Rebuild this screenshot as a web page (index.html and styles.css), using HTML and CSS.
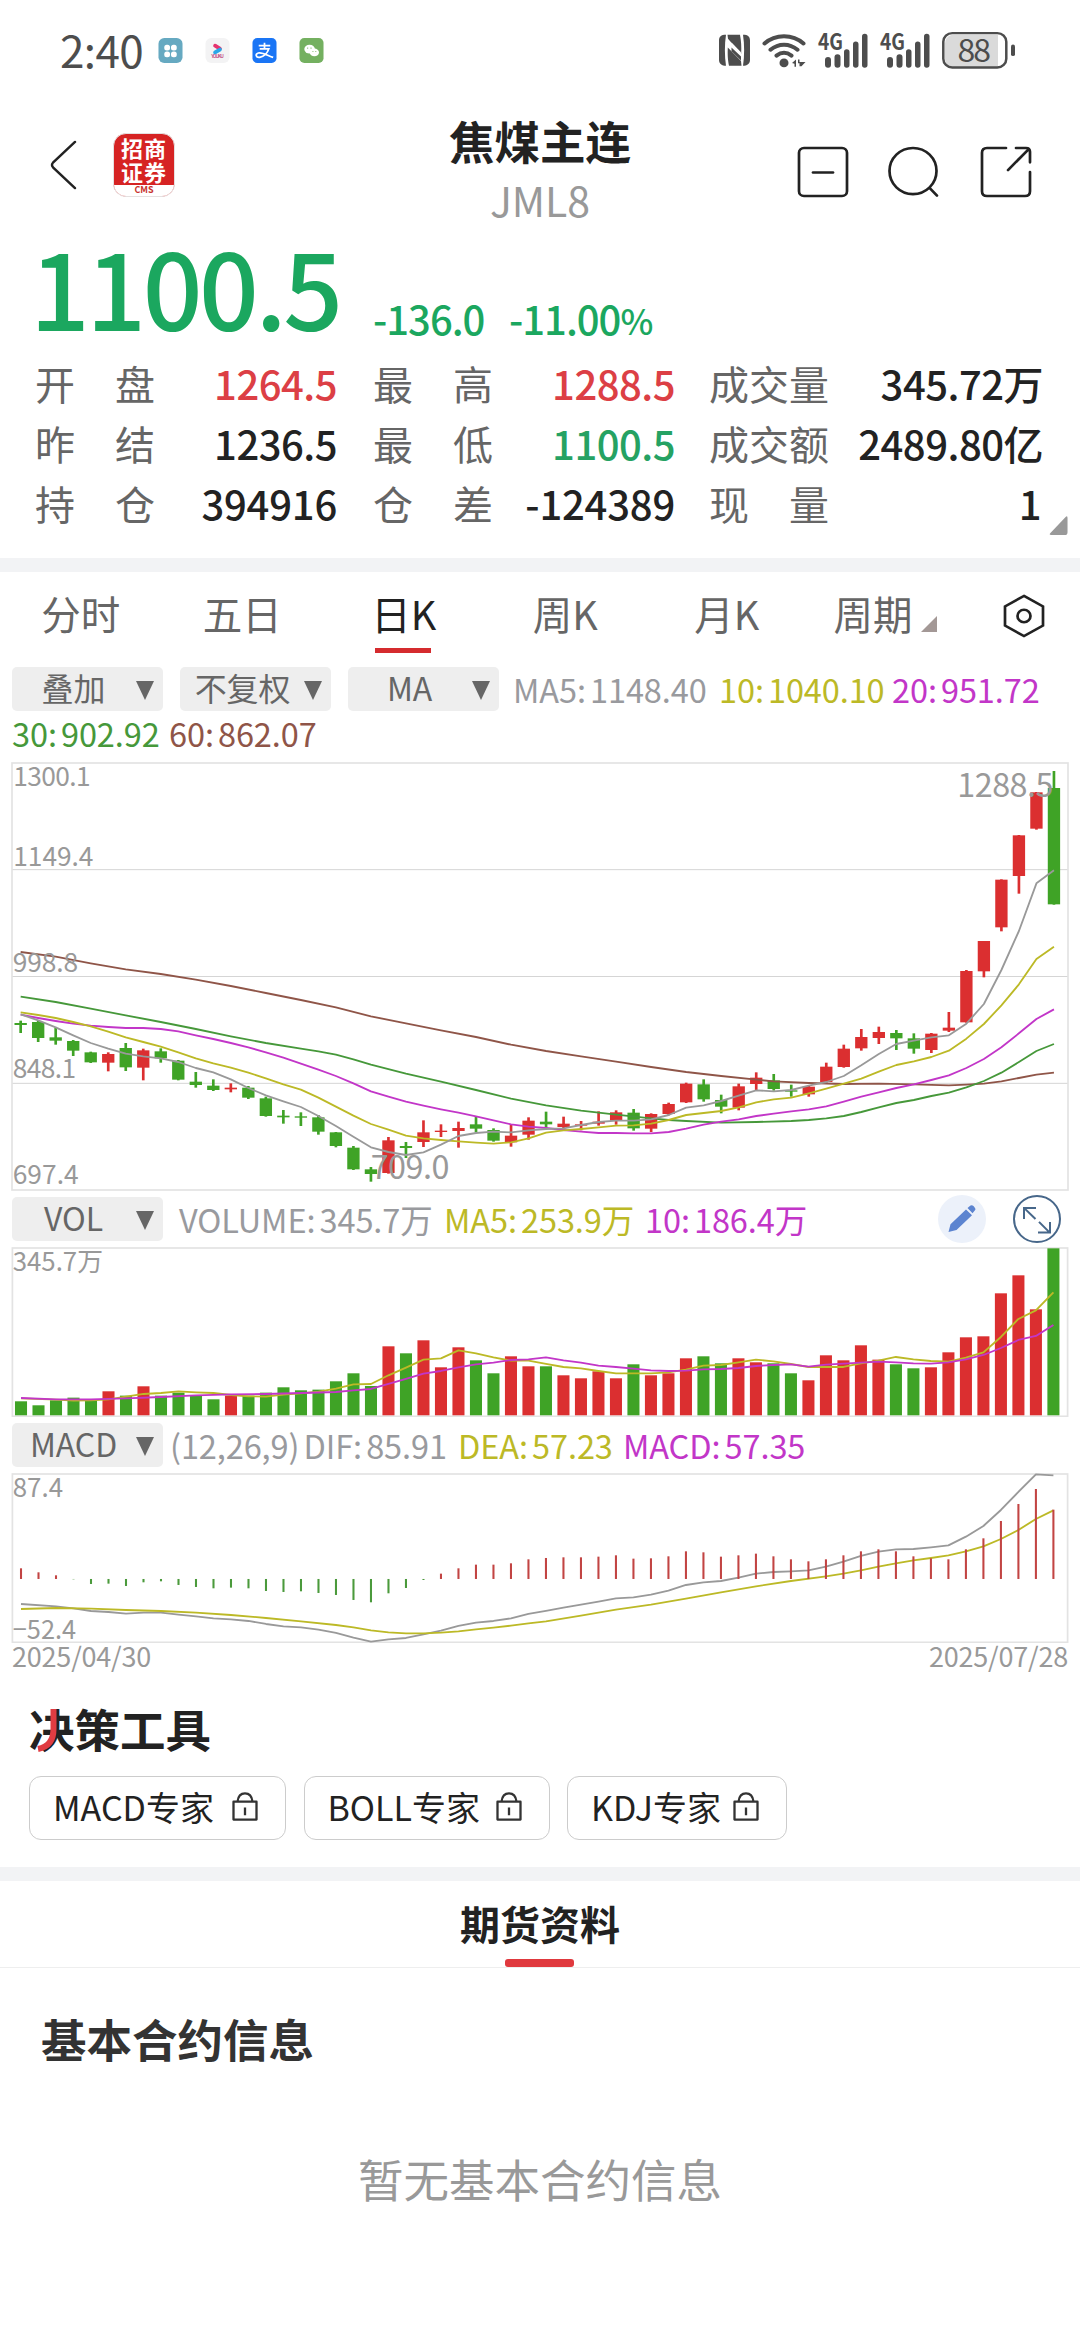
FILE: index.html
```html
<!DOCTYPE html>
<html lang="zh-CN">
<head>
<meta charset="utf-8">
<title>焦煤主连 JML8</title>
<link rel="stylesheet" href="styles.css">
</head>
<body>
<div class="status">
  <span class="clock">2:40</span>
  <svg class="notif" viewBox="0 0 25 26"><rect width="25" height="26" rx="6" fill="#66a9c1"/><g fill="#fff"><rect x="6" y="7" width="6" height="6" rx="2.6"/><rect x="13" y="7" width="6" height="6" rx="2.6"/><rect x="6" y="14" width="6" height="6" rx="2.6"/><rect x="13" y="14" width="6" height="6" rx="2.6"/></g></svg>
  <svg class="notif" viewBox="0 0 25 26"><rect width="25" height="26" rx="6" fill="#f3f3f4"/><path d="M10 8l5 3" stroke="#e5346f" stroke-width="4" stroke-linecap="round"/><path d="M10 15l5-3" stroke="#2aa7e8" stroke-width="4" stroke-linecap="round"/><text x="12.5" y="21" class="tiny" text-anchor="middle" fill="#c4568a" textLength="13">YOUKU</text></svg>
  <svg class="notif" viewBox="0 0 25 26"><rect width="25" height="26" rx="5" fill="#1a75f5"/><path d="M6.500 8h12M12.500 5v6M7.500 11.200h9.500c-1.500 4.500-5 8-9.500 9-4 .5-5-3.500-1.500-4.600 4-1 9 2.200 15.500 4.600" fill="none" stroke="#fff" stroke-width="1.800"/></svg>
  <svg class="notif" viewBox="0 0 25 26"><rect width="25" height="26" rx="5" fill="#74b060"/><ellipse cx="10.500" cy="11.500" rx="5.500" ry="4.600" fill="#fff"/><ellipse cx="15.500" cy="15" rx="4.800" ry="4" fill="#fff"/><g fill="#74b060"><circle cx="8.500" cy="10.500" r=".7"/><circle cx="12" cy="10.500" r=".7"/><circle cx="14" cy="14" r=".6"/><circle cx="17" cy="14" r=".6"/></g></svg>
  <svg class="sys" viewBox="715 30 305 44" preserveAspectRatio="none">
    <g fill="#4d4d4d">
      <path d="M726 36c-5 0-7 2-7 6v20c0 4 3 6 7 6-1.500-10-1.500-22 0-32zM743 36c5 0 7 2 7 6v20c0 4-3 6-7 6 1.500-10 1.500-22 0-32z"/>
      <path d="M727.500 36H740c1.200 7 1.500 12 1.200 19.500L728 40zM741.500 68H729c-1.200-7-1.500-11-1.200-19L741 63z"/>
      <path d="M731.500 44l9.500 10v7l-9.500-10z" fill="#fff"/><path d="M731.500 49l9.500 9.500v4L731.500 53z"/>
      <circle cx="784" cy="65" r="4.500"/>
      <path d="M792 65l4-3.500v7.500h-1.500v-3zM798 61.500h1.500v2.500h6l-4 4.500h-2v-3h-1.500z"/>
      <rect x="825" y="59" width="6" height="11" rx="3"/><rect x="834.500" y="56" width="6" height="14" rx="3"/><rect x="844" y="51" width="5.500" height="19" rx="2.700"/><rect x="853" y="43" width="5.500" height="27" rx="2.700"/><rect x="862" y="35" width="5.500" height="35" rx="2.700"/>
      <rect x="887" y="59" width="6" height="11" rx="3"/><rect x="896.500" y="56" width="6" height="14" rx="3"/><rect x="906" y="51" width="5.500" height="19" rx="2.700"/><rect x="915" y="43" width="5.500" height="27" rx="2.700"/><rect x="924" y="35" width="5.500" height="35" rx="2.700"/>
      <text class="net" x="818" y="51.500" textLength="25" lengthAdjust="spacingAndGlyphs">4G</text><text class="net" x="880" y="51.500" textLength="25" lengthAdjust="spacingAndGlyphs">4G</text>
      <rect x="1011" y="46" width="4" height="12" rx="2"/>
    </g>
    <g fill="none" stroke="#4d4d4d" stroke-width="4" stroke-linecap="round"><path d="M764.500 45c11-10 28-10 39 0M770.500 51.500c8-7 19-7 27 0M776.500 57.500c5-4 10-4 15 0"/></g>
    <path d="M952 36h46v34h-46q-7-2-7-9V45q0-7 7-9z" fill="#dadada"/>
    <rect x="943.300" y="34.300" width="63" height="35.500" rx="9" fill="none" stroke="#4d4d4d" stroke-width="2.500"/>
    <text class="batt" x="957.500" y="64" textLength="33.500">88</text>
  </svg>
</div>

<header class="top">
  <svg class="back" viewBox="0 0 27 52" preserveAspectRatio="none"><path d="M25 2L3 23.500q-2 2.500 0 5L25 50" fill="none" stroke="#222" stroke-width="2.400" stroke-linecap="round"/></svg>
  <div class="brand"><div class="brand-name">招商<br>证券</div><div class="brand-tag">CMS</div></div>
  <div class="title"><h1>焦煤主连</h1><div class="code">JML8</div></div>
  <svg class="act" viewBox="0 0 52 54" preserveAspectRatio="none"><rect x="2" y="2" width="48" height="50" rx="5"/><path d="M16 27.500h20"/></svg>
  <svg class="act" viewBox="0 0 52 54" preserveAspectRatio="none"><ellipse cx="25" cy="26" rx="23.500" ry="24"/><path d="M42 44l7 7.500"/></svg>
  <svg class="act" viewBox="0 0 52 54" preserveAspectRatio="none"><path d="M26 2H7Q2 2 2 7v40q0 5 5 5h38q5 0 5-5V27M36 2h10q4 0 4 4v11M49 3L28 25"/></svg>
</header>

<div class="price"><span class="last">1100.5</span><span class="chg">-136.0</span><span class="chg">-11.00<small>%</small></span></div>
<div class="quote">
  <span class="k"><i>开</i><i>盘</i></span><b class="up">1264.5</b><span class="k"><i>最</i><i>高</i></span><b class="up">1288.5</b><span class="k"><i>成</i><i>交</i><i>量</i></span><b>345.72万</b>
  <span class="k"><i>昨</i><i>结</i></span><b>1236.5</b><span class="k"><i>最</i><i>低</i></span><b class="down">1100.5</b><span class="k"><i>成</i><i>交</i><i>额</i></span><b>2489.80亿</b>
  <span class="k"><i>持</i><i>仓</i></span><b class="whole">394916</b><span class="k"><i>仓</i><i>差</i></span><b class="whole">-124389</b><span class="k"><i>现</i><i>量</i></span><b class="one">1</b>
  <svg class="corner" viewBox="0 0 19 20"><path d="M17 1q2-2 2 1v15q0 3-3 3H2q-3 0-1-2z" fill="#999"/></svg>
</div>
<div class="band"></div>

<nav class="tabs">
  <span>分时</span><span>五日</span><span class="on">日K</span><span>周K</span><span>月K</span>
  <span class="period">周期<svg viewBox="0 0 16 16"><path d="M16 0v16H0z" fill="#a39896"/></svg></span>
  <svg class="hex" viewBox="0 0 42 46" preserveAspectRatio="none"><path d="M21 2l19 11v20L21 44 2 33V13z"/><circle cx="21" cy="23" r="6.500"/></svg>
</nav>

<div class="legend main">
  <span class="btn">叠加</span><span class="btn wide">不复权</span><span class="btn">MA</span>
  <span class="g">MA5: 1148.40</span><span class="y">10: 1040.10</span><span class="m">20: 951.72</span>
</div>
<div class="legend second"><span class="n">30: 902.92</span><span class="r">60: 862.07</span></div>

<svg class="kline" viewBox="0 66 3240 1290">
  <path class="gridline" d="M36 389H3204M36 709.500H3204M36 1030H3204"/>
  <rect class="frame" x="36" y="69" width="3168" height="1281"/>
  <g id="k-plot"></g>
  <g class="axis"><text x="40" y="137" textLength="232">1300.1</text><text x="40" y="378" textLength="240">1149.4</text><text x="38" y="695" textLength="196">998.8</text><text x="38" y="1014" textLength="190">848.1</text><text x="38" y="1331" textLength="198">697.4</text></g>
  <g class="peak"><text x="2872" y="171" textLength="288">1288.5</text><text x="1112" y="1318" textLength="236">709.0</text></g>
</svg>

<div class="legend vol">
  <span class="btn">VOL</span><span class="g">VOLUME: 345.7万</span><span class="y">MA5: 253.9万</span><span class="m">10: 186.4万</span>
  <svg class="tool edit" viewBox="0 0 48 50" preserveAspectRatio="none"><ellipse cx="24" cy="25" rx="24" ry="25" fill="#ecf1fa"/><path d="M10.500 38.500l2-8L28 15l6 6-15.500 15.500zM29.500 13.500l3-2.500q1.500-1 3 .500l1.500 2q1 1.500 0 2.500l-2.500 3z" fill="#5c84d0"/></svg>
  <svg class="tool" viewBox="0 0 48 50" preserveAspectRatio="none"><g fill="none" stroke="#47678a" stroke-width="2"><ellipse cx="24" cy="25" rx="23" ry="24"/><path d="M11 25V13.500h12M11.500 14l11 11M37 28v11H25M26 28l10.500 11"/></g></svg>
</div>
<svg class="sub" viewBox="0 170 3136 511" preserveAspectRatio="none">
  <rect class="frame" x="36" y="173" width="3064" height="505"/>
  <g id="v-plot"></g>
  <g class="axis"><text x="37" y="242" textLength="262" lengthAdjust="spacingAndGlyphs">345.7万</text></g>
</svg>
<div class="legend macd">
  <span class="btn">MACD</span><span class="g">(12,26,9)&nbsp;DIF: 85.91</span><span class="y">DEA: 57.23</span><span class="m">MACD: 57.35</span>
</div>
<svg class="sub" viewBox="0 848 3136 511" preserveAspectRatio="none">
  <rect class="frame" x="36" y="851" width="3064" height="505"/>
  <g id="m-plot"></g>
  <g class="axis"><text x="37" y="920" textLength="146" lengthAdjust="spacingAndGlyphs">87.4</text><text x="37" y="1346" textLength="184" lengthAdjust="spacingAndGlyphs">−52.4</text></g>
</svg>
<div class="dates"><span>2025/04/30</span><span>2025/07/28</span></div>

<section class="tools">
  <h2>决策工具<svg viewBox="0 0 22 44"><path d="M17.500 0v20q0 17-15.500 20" fill="none" stroke="#e03c42" stroke-width="6"/></svg></h2>
  <div class="pills">
    <span class="pill">MACD专家<svg viewBox="0 0 26 30" preserveAspectRatio="none"><path d="M1.500 10h23v18.500h-23zM5.500 10q1-8.500 7.500-8.500T20.500 10M13 16v8"/></svg></span>
    <span class="pill">BOLL专家<svg viewBox="0 0 26 30" preserveAspectRatio="none"><path d="M1.500 10h23v18.500h-23zM5.500 10q1-8.500 7.500-8.500T20.500 10M13 16v8"/></svg></span>
    <span class="pill">KDJ专家<svg viewBox="0 0 26 30" preserveAspectRatio="none"><path d="M1.500 10h23v18.500h-23zM5.500 10q1-8.500 7.500-8.500T20.500 10M13 16v8"/></svg></span>
  </div>
</section>
<div class="band"></div>
<div class="info-tab"><span>期货资料</span></div>
<section class="info"><h3>基本合约信息</h3><p>暂无基本合约信息</p></section>
<script src="chart.js"></script>
</body>
</html>
```
FILE: styles.css
```css
* { box-sizing: border-box; }
html, body { margin: 0; }
body {
  width: 1080px; height: 2340px; overflow: hidden; background: #fff; color: #222;
  font-family: "Noto Sans CJK SC", "Noto Sans", sans-serif; font-size: 40px;
}
i { font-style: normal; }
svg { display: block; flex: none; }
h1, h2, h3, p { margin: 0; }

.status { height: 104px; display: flex; align-items: center; padding: 0 60px 3px; }
.clock { width: 98px; font-size: 44px; line-height: 60px; letter-spacing: -.6px; color: #4d4d4d; padding-bottom: 3px; }
.notif { width: 25px; height: 25px; margin-right: 22px; }
.tiny { font-size: 5px; font-weight: 700; }
.sys { width: 305px; height: 42.600px; margin-left: auto; }
.net { font-size: 23px; font-weight: 700; }
.batt { font-size: 32px; fill: #4d4d4d; font-weight: 400; }

.top { height: 122px; display: grid; grid-template-columns: 62px 93px minmax(0, 1fr) 51px 40px 52px 40px 52px; padding: 0 48px 0 50px; align-items: start; }
.back { width: 27px; height: 50px; margin-top: 36px; }
.brand { width: 62px; height: 64px; margin-top: 29px; margin-left: 1px; border-radius: 13px; overflow: hidden; background: #d62323; border: 1px solid #e5e0e0; }
.brand-name { height: 51px; padding-top: 2px; text-align: center; color: #fff; font-weight: 700; font-size: 22px; line-height: 23.500px; letter-spacing: 1px; }
.brand-tag { height: 12px; background: #fff; color: #c8342e; font-size: 9px; font-weight: 700; line-height: 10px; text-align: center; }
.title { grid-column: 3; text-align: center; margin-top: 4px; width: 670px; }
.title h1 { font-size: 45.500px; line-height: 64px; font-weight: 700; }
.code { font-size: 41px; line-height: 48px; color: #999; padding-top: 3px; }
.top .act { width: 52px; height: 52px; margin-top: 41.500px; fill: none; stroke: #222; stroke-width: 2.700; stroke-linecap: round; }
.top .act:nth-of-type(2) { grid-column: 4; }
.top .act:nth-of-type(3) { grid-column: 6; }
.top .act:nth-of-type(4) { grid-column: 8; }

.price { height: 129px; display: flex; align-items: baseline; padding-left: 30px; color: #1ba75f; font-weight: 500; line-height: 119px; }
.last { width: 343px; font-size: 105px; letter-spacing: -3.500px; }
.chg { width: 136px; font-size: 40px; letter-spacing: -1px; white-space: nowrap; transform: translateY(4px); }
.chg small { font-size: 35px; }
.quote { position: relative; height: 203px; padding: 0 37px 0 35px; display: grid; grid-template-columns: 120px 182px 155px 183px 154px 1fr; grid-template-rows: repeat(3, 60px); line-height: 56px; }
.k { display: flex; justify-content: space-between; width: 120px; color: #666; }
.k:nth-of-type(3n+2), .k:nth-of-type(3n) { margin-left: 36px; }
.k:nth-of-type(3n) { margin-left: 34px; }
.quote b { text-align: right; font-weight: 500; font-size: 40px; letter-spacing: -.5px; white-space: nowrap; }
.quote .whole { letter-spacing: -.2px; }
.quote .one { padding-right: 2px; }
.up { color: #dc3f45; }
.down { color: #25a263; }
.corner { position: absolute; left: 1049px; top: 161px; width: 19px; height: 19px; }
.band { height: 14px; background: #f2f3f5; }

.tabs { height: 95px; display: flex; color: #666; line-height: 82px; font-size: 39.500px; }
.tabs > span { width: 161.500px; text-align: center; position: relative; }
.tabs .on { color: #222; }
.tabs .on::after { content: ""; position: absolute; left: 52px; top: 76px; width: 56px; height: 5px; background: #d52b2e; }
.tabs .period { width: 125px; margin-left: 26px; display: flex; gap: 8px; }
.tabs .period svg { width: 16px; height: 16px; margin-top: 44px; }
.hex { width: 42px; height: 44px; margin: 21.500px 0 0 44px; fill: none; stroke: #222; stroke-width: 2.700; }

.legend { display: flex; align-items: center; padding-left: 12px; font-size: 32.500px; letter-spacing: -.1px; white-space: nowrap; line-height: 44px; height: 44px; position: relative; }
.legend > span { word-spacing: -3px; }
.btn { width: 151px; height: 44px; margin-right: 17px; border-radius: 5px; background: #eee; color: #666; font-size: 32px; line-height: 41px; text-align: center; padding-right: 28px; position: relative; }
.btn::after { content: ""; position: absolute; right: 9px; top: 14px; border: 9px solid transparent; border-top: 19px solid #666; border-bottom: 0; }
.btn.wide { padding-right: 26px; }
.g { color: #999a9e; } .y { color: #bcb926; } .m { color: #c236c8; } .n { color: #46983a; } .r { color: #8f5548; }
.main .btn:nth-child(3) { margin-right: 14px; }
.main .g { width: 206px; } .main .y { width: 173px; }
.second { height: 51px; align-items: flex-start; }
.second .n { width: 157px; }
.vol { margin-top: 5px; }
.vol .btn { margin-right: 16px; }
.vol .g { width: 265px; } .vol .y { width: 201px; }
.tool { width: 48px; height: 48px; position: absolute; left: 1013px; top: -2px; }
.tool.edit { left: 938px; }
.macd { margin-top: 6px; }
.macd .btn { margin-right: 7px; }
.macd .g { width: 288px; } .macd .y { width: 165px; }

.kline { width: 1080px; height: 430px; }
.sub { width: 1080px; height: 170.300px; margin-top: 5.700px; }
.frame { fill: none; stroke: #e3e3e3; stroke-width: 5; }
.gridline { stroke: #d5d5d5; stroke-width: 3; }
.axis text { font-size: 79px; fill: #999; }
.peak text { font-size: 97px; fill: #999; }
.line { fill: none; stroke-width: 5.500; stroke-linejoin: round; }
.dates { display: flex; justify-content: space-between; padding: 0 12px; height: 40px; font-size: 27px; line-height: 26px; color: #999; letter-spacing: -.2px; }

.tools { height: 184px; padding: 15px 29px 0; }
.tools h2 { font-size: 45.500px; line-height: 60px; height: 78px; position: relative; }
.tools h2 svg { position: absolute; left: 7px; top: 11px; width: 22px; height: 44px; }
.pills { display: flex; gap: 17.500px; }
.pill { width: 257px; height: 64px; border: 1px solid #ccc; border-radius: 12px; padding: 0 27px 2px 23px; display: flex; align-items: center; justify-content: space-between; font-size: 34px; white-space: nowrap; }
.pill:nth-child(2) { width: 246px; }
.pill:nth-child(3) { width: 220px; }
.pill svg { width: 26px; height: 29px; fill: none; stroke: #333; stroke-width: 2.300; stroke-linejoin: round; }
.info-tab { height: 87px; border-bottom: 1px solid #eee; text-align: center; font-weight: 700; line-height: 84px; font-size: 40px; position: relative; }
.info-tab::after { content: ""; position: absolute; left: 505px; bottom: 0; width: 69px; height: 8px; border-radius: 3px; background: #e0393e; }
.info { padding: 0 41px; }
.info h3 { font-size: 45.500px; line-height: 66px; padding-top: 37px; color: #333; }
.info p { font-size: 45.500px; line-height: 66px; margin-top: 74px; color: #999; text-align: center; }
```
FILE: chart.js
```js
// Each plot is drawn in the units of its own SVG viewBox.
const RED = '#db2f30', GREEN = '#3fa326';
const NS = 'http://www.w3.org/2000/svg';

function rect(parent, x, y, w, h, fill) {
  const r = document.createElementNS(NS, 'rect');
  r.setAttribute('x', x); r.setAttribute('y', y);
  r.setAttribute('width', w); r.setAttribute('height', Math.max(h, 1));
  r.setAttribute('fill', fill);
  parent.appendChild(r);
}
// "index:y" pairs; a missing index is interpolated by the straight segment.
function line(parent, pts, color, x0, step) {
  const d = pts.trim().split(/\s+/).map(p => {
    const [i, y] = p.split(':').map(Number);
    return (x0 + i * step) + ',' + y;
  }).join(' ');
  const p = document.createElementNS(NS, 'polyline');
  p.setAttribute('points', d); p.setAttribute('class', 'line'); p.setAttribute('stroke', color);
  parent.appendChild(p);
}
const seq = s => s.trim().split(/\s+/).map((y, i) => i + ':' + y).join(' ');

// high, body top, body bottom, low, direction
const candles = `842,849,855,879,g 842,846,894,906,g 862,892,902,914,g 900,903,932,948,g 935,937,967,969,g
937,942,968,994,r 909,924,982,993,g 926,931,983,1021,r 925,934,955,968,g 960,962,1019,1021,g
996,1025,1035,1043,g 1018,1037,1050,1053,g 1030,1043,1048,1057,r 1038,1043,1073,1077,g 1070,1075,1128,1130,g
1110,1127,1132,1151,g 1117,1129,1133,1158,g 1125,1132,1175,1184,g 1176,1177,1218,1222,g 1218,1223,1288,1290,g
1281,1288,1302,1325,g 1191,1201,1299,1301,r 1206,1218,1224,1254,g 1141,1177,1206,1221,r 1153,1172,1176,1191,r
1145,1164,1173,1223,r 1130,1153,1166,1177,g 1165,1170,1202,1205,g 1152,1187,1207,1220,r 1132,1142,1184,1199,r
1115,1145,1153,1163,g 1130,1151,1161,1165,r 1143,1153,1157,1171,r 1114,1145,1151,1157,r 1111,1117,1142,1154,r
1107,1118,1165,1172,g 1120,1122,1166,1176,r 1088,1092,1122,1126,r 1028,1031,1087,1089,r 1018,1033,1078,1085,g
1064,1080,1100,1120,g 1031,1039,1103,1111,r 997,1013,1032,1052,r 1002,1021,1047,1052,g 1034,1051,1055,1070,g
1035,1040,1063,1070,r 968,980,1026,1028,r 914,926,981,983,r 867,891,925,932,r 860,876,894,912,r
870,879,895,930,g 880,895,926,941,g 879,881,930,939,r 816,863,872,876,r 690,693,847,848,r
603,603,694,712,r 418,419,562,574,r 285,286,408,461,r 156,157,266,269,r 93,144,493,494,g`.trim().split(/\s+/);

const k = document.getElementById('k-plot');
candles.forEach((c, i) => {
  const [hi, top, bot, lo, dir] = c.split(',');
  const x = 62 + i * 52.54, col = dir === 'r' ? RED : GREEN;
  rect(k, x - 4, +hi, 8, lo - hi, col);
  rect(k, x - 18.5, +top, 37, bot - top, col);
});
line(k, '0:636 2:650 4:670 6:688 8:702 10:719 12:738 14:759 16:780 18:802 20:829 22:850 24:871 26:891 28:914 30:933 32:949 34:965 36:981 38:996 40:1008 42:1019 43:1024 45:1029 47:1032 49:1031 51:1033 53:1036 54:1034 55:1031 56:1024 57:1014 58:1004 59:998', '#8f5548', 62, 52.54);
line(k, '0:770 2:786 4:806 6:826 8:846 10:867 12:889 14:909 16:926 17:934 18:944 19:958 20:974 22:1001 24:1025 26:1050 28:1076 30:1096 32:1112 34:1124 36:1135 37:1140 38:1143 40:1148 42:1146 44:1143 45:1140 46:1135 47:1128 48:1116 49:1102 50:1089 51:1080 52:1068 53:1058 54:1042 55:1023 56:998 57:966 58:933 59:912', '#46983a', 62, 52.54);
line(k, seq('824 834 843 851 857 861 864 864 867 874 886 897 909 922 937 953 971 989 1008 1030 1054 1070 1085 1097 1108 1118 1129 1141 1153 1160 1164 1170 1175 1179 1179 1180 1180 1176 1166 1154 1145 1138 1128 1121 1114 1108 1099 1085 1070 1057 1044 1033 1020 1006 984 957 922 880 837 808'), '#c236c8', 62, 52.54);
line(k, seq('817 825 834 846 859 875 892 906 920 937 955 970 983 998 1015 1033 1049 1073 1100 1127 1152 1169 1187 1195 1200 1204 1208 1211 1207 1195 1178 1171 1167 1162 1157 1156 1151 1140 1125 1119 1113 1102 1087 1078 1073 1060 1046 1031 1016 995 975 964 951 932 896 852 796 733 657 620'), '#bcb926', 62, 52.54);
line(k, seq('823 841 862 886 909 926 941 949 955 966 984 997 1018 1044 1066 1084 1101 1128 1158 1190 1222 1236 1245 1237 1214 1188 1179 1175 1177 1171 1167 1165 1155 1146 1142 1142 1138 1125 1103 1096 1083 1067 1051 1054 1050 1037 1026 1008 976 942 912 902 892 886 851 792 690 573 430 391'), '#999', 62, 52.54);

const vols = '633g 645g 630g 622g 630g 603r 616g 588r 616g 607g 616g 627g 616r 616g 607g 591g 600g 598g 573g 549g 587g 468r 489g 450r 531r 471r 510g 549g 498r 528r 528g 555r 564r 543r 564r 522g 555r 549r 504r 498g 519g 504r 516r 519g 549g 570r 495r 510r 465r 508r 522g 534g 531r 486r 441r 438r 309r 255r 357r 174g'.split(' ');
const v = document.getElementById('v-plot');
vols.forEach((s, i) => {
  const y = parseInt(s, 10);
  rect(v, 61 + i * 50.81 - 17.5, y, 35, 675 - y, s.endsWith('r') ? RED : GREEN);
});
line(v, '0:624 2:628 3:631 4:630 5:627 6:619 7:611 8:608 9:603 10:606 11:608 12:614 13:618 14:619 15:613 16:609 17:604 18:595 19:582 20:581 21:555 22:532 23:508 24:504 25:480 26:489 27:501 28:511 29:511 30:521 31:530 32:534 33:542 34:549 35:549 36:549 37:546 38:538 39:526 40:524 41:516 42:508 43:513 44:521 45:530 46:530 47:530 48:519 49:511 50:500 51:507 52:512 53:514 54:502 55:486 56:440 57:386 58:360 59:306', '#bcb926', 61, 50.81);
line(v, '0:623 2:627 4:627 6:624 8:620 10:615 12:612 14:611 16:608 18:605 19:600 20:596 21:581 22:566 23:550 24:542 25:531 26:522 27:517 28:509 29:507 30:501 31:510 32:517 33:526 34:530 35:535 36:540 37:542 38:541 39:537 40:536 41:533 42:527 43:524 44:522 45:529 46:523 47:520 48:517 49:514 50:516 51:519 52:520 53:516 54:507 55:494 56:473 57:449 58:437 59:404', '#c236c8', 61, 50.81);

const macd = '1134 1146 1155 1167 1181 1180 1187 1176 1173 1184 1190 1194 1192 1194 1202 1205 1203 1208 1214 1229 1236 1209 1193 1169 1150 1134 1123 1123 1119 1107 1103 1101 1101 1099 1095 1105 1104 1098 1083 1086 1099 1095 1090 1098 1107 1113 1107 1095 1083 1077 1083 1098 1104 1107 1077 1044 992 941 896 958'.split(' ').map(Number);
const m = document.getElementById('m-plot'), ZERO = 1166;
line(m, '0:1241 2:1248 3:1254 4:1262 5:1265 6:1270 7:1267 8:1267 9:1273 10:1278 11:1284 12:1287 13:1292 14:1301 15:1308 16:1311 17:1318 18:1328 19:1342 20:1354 21:1347 22:1343 23:1332 24:1321 25:1307 26:1297 27:1292 28:1284 29:1271 30:1262 31:1252 32:1243 33:1234 34:1224 35:1221 36:1213 37:1201 38:1184 39:1176 40:1172 41:1162 42:1150 43:1145 44:1143 45:1140 46:1129 47:1114 48:1097 49:1084 50:1077 51:1076 52:1071 53:1065 54:1039 55:1007 56:959 57:905 58:852 59:855', '#999', 61, 50.81);
line(m, '0:1256 2:1253 4:1255 6:1259 8:1262 10:1267 12:1274 14:1283 16:1293 18:1304 19:1311 20:1320 21:1326 22:1329 23:1329 24:1327 25:1323 26:1317 27:1312 28:1306 29:1299 30:1293 32:1276 34:1258 36:1243 38:1225 40:1206 42:1188 44:1172 46:1158 47:1150 48:1140 49:1129 50:1119 51:1110 52:1103 53:1095 54:1083 55:1068 56:1046 57:1019 58:986 59:960', '#bcb926', 61, 50.81);
macd.forEach((y, i) => {
  rect(m, 61 + i * 50.81 - 3, Math.min(y, ZERO), 6, Math.abs(y - ZERO), y < ZERO ? '#c24443' : '#4b9a3c');
});
```
